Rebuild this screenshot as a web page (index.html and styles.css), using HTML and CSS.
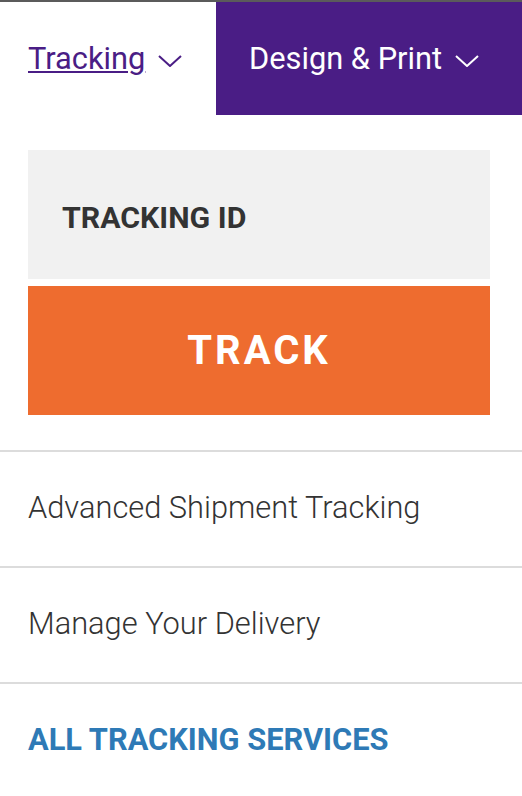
FILE: index.html
```html
<!DOCTYPE html>
<html lang="en">
<head>
<meta charset="utf-8">
<link rel="stylesheet" href="styles.css">
</head>
<body>
<nav class="tabs">
  <a class="tab tab-active" href="#"><span class="tab-label">Tracking</span>
    <svg class="chev" viewBox="0 0 24 12" width="24" height="12"><path d="M1 1 L12 11 L23 1" fill="none" stroke="currentColor" stroke-width="2"/></svg>
  </a>
  <a class="tab tab-purple" href="#"><span>Design &amp; Print</span>
    <svg class="chev" viewBox="0 0 24 12" width="24" height="12"><path d="M1 1 L12 11 L23 1" fill="none" stroke="currentColor" stroke-width="2"/></svg>
  </a>
</nav>
<section class="track-panel">
  <div class="track-input">TRACKING ID</div>
  <button class="track-btn">TRACK</button>
</section>
<ul class="links">
  <li class="link-item">Advanced Shipment Tracking</li>
  <li class="link-item">Manage Your Delivery</li>
  <li class="link-item link-all">ALL TRACKING SERVICES</li>
</ul>
</body>
</html>
```
FILE: styles.css
```css
* { box-sizing: border-box; }
html, body { margin: 0; padding: 0; }
body {
  width: 522px;
  font-family: Roboto, "Liberation Sans", sans-serif;
  background: #fff;
  border-top: 2px solid #5b5b5b;
}
.tabs {
  display: flex;
  height: 113px;
}
.tab {
  display: flex;
  align-items: center;
  text-decoration: none;
  font-size: 30.8px;
  gap: 13px;
}
.tab-active {
  width: 216px;
  padding-left: 28px;
  color: #4a1d85;
}
.tab-active .tab-label { text-decoration: underline; text-underline-offset: 2px; text-decoration-thickness: 2px; }
.tab-purple {
  flex: 1;
  background: #4a1d85;
  color: #fff;
  padding-left: 33px;
}
.chev { display: block; margin-top: 4px; }
.track-panel {
  padding: 35px 32px 35px 28px;
  display: flex;
  flex-direction: column;
  gap: 7px;
}
.track-input {
  height: 129px;
  background: #f1f1f1;
  display: flex;
  align-items: center;
  padding: 5px 0 0 34px;
  font-size: 30.3px;
  font-weight: 700;
  color: #333;
}
.track-btn {
  height: 129px;
  border: 0;
  background: #ee6c2f;
  color: #fff;
  font-family: inherit;
  font-size: 40px;
  font-weight: 700;
  letter-spacing: 3px;
  padding: 0;
}
.links { list-style: none; margin: 0; padding: 0; }
.link-item {
  border-top: 2px solid #dcdcdc;
  height: 116px;
  display: flex;
  align-items: center;
  padding: 0 0 3px 28px;
  font-size: 30.8px;
  font-weight: 300;
  color: #333;
}
.link-all {
  font-weight: 700;
  color: #2e7ab6;
}
```
